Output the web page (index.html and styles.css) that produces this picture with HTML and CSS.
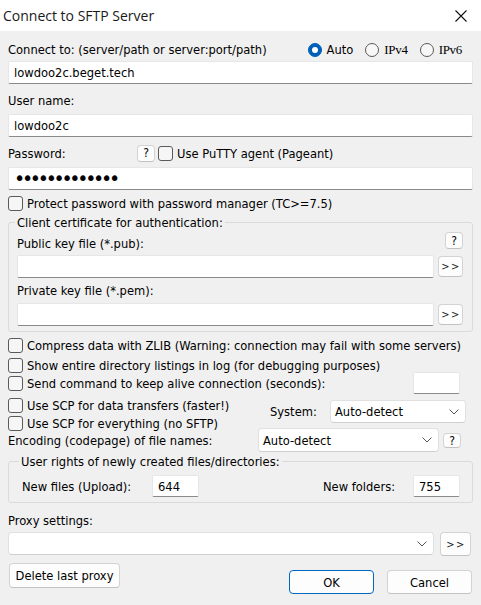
FILE: index.html
```html
<!DOCTYPE html>
<html>
<head>
<meta charset="utf-8">
<link rel="stylesheet" href="styles.css">
</head>
<body>
<div class="window">
  <div class="titlebar">
    <span class="title">Connect to SFTP Server</span>
    <svg class="close" width="12" height="12" viewBox="0 0 12 12"><path d="M0.5 0.5 L11.5 11.5 M11.5 0.5 L0.5 11.5" stroke="#111" stroke-width="1.1" fill="none"/></svg>
  </div>
  <div class="content">
    <div class="row r-connect">
      <span>Connect to: (server/path or server:port/path)</span>
      <div class="radios">
        <span class="radio on"></span><span class="rlabel">Auto</span>
        <span class="radio"></span><span class="rlabel serif">IPv4</span>
        <span class="radio"></span><span class="rlabel serif">IPv6</span>
      </div>
    </div>
    <div class="edit e-host">lowdoo2c.beget.tech</div>
    <div class="label l-user">User name:</div>
    <div class="edit e-user">lowdoo2c</div>
    <div class="row r-pass">
      <span class="pw-label">Password:</span>
      <span class="btn help">?</span>
      <span class="check"><span class="box"></span>Use PuTTY agent (Pageant)</span>
    </div>
    <div class="edit e-pass"><span class="dots">•••••••••••••</span></div>
    <div class="check r-protect"><span class="box"></span>Protect password with password manager (TC&gt;=7.5)</div>

    <fieldset class="group g-cert">
      <legend>Client certificate for authentication:</legend>
      <div class="r-pub">
        <span class="pub-label">Public key file (*.pub):</span>
        <span class="btn help help-pub">?</span>
      </div>
      <div class="file-row">
        <div class="edit grow"></div>
        <span class="btn more">&gt;&gt;</span>
      </div>
      <div class="label l-priv">Private key file (*.pem):</div>
      <div class="file-row r-priv">
        <div class="edit grow"></div>
        <span class="btn more">&gt;&gt;</span>
      </div>
    </fieldset>

    <div class="check c-row c-compress"><span class="box"></span>Compress data with ZLIB (Warning: connection may fail with some servers)</div>
    <div class="check c-row c-show"><span class="box"></span>Show entire directory listings in log (for debugging purposes)</div>
    <div class="check c-row c-send"><span class="box"></span>Send command to keep alive connection (seconds):<div class="edit small keepalive"></div></div>

    <div class="scp">
      <div class="scp-left">
        <div class="check c-row"><span class="box"></span>Use SCP for data transfers (faster!)</div>
        <div class="check c-row"><span class="box"></span>Use SCP for everything (no SFTP)</div>
      </div>
      <div class="system">
        <span class="sys-label">System:</span>
        <div class="combo sys-combo"><span>Auto-detect</span><svg class="chev" width="10" height="6" viewBox="0 0 10 6"><path d="M0.5 0.5 L5 5 L9.5 0.5" stroke="#555" stroke-width="1" fill="none"/></svg></div>
      </div>
    </div>

    <div class="enc">
      <span class="enc-label">Encoding (codepage) of file names:</span>
      <div class="combo enc-combo"><span>Auto-detect</span><svg class="chev" width="10" height="6" viewBox="0 0 10 6"><path d="M0.5 0.5 L5 5 L9.5 0.5" stroke="#555" stroke-width="1" fill="none"/></svg></div>
      <span class="btn help help-enc">?</span>
    </div>

    <fieldset class="group g-rights">
      <legend>User rights of newly created files/directories:</legend>
      <div class="rights-row">
        <span class="nf-label">New files (Upload):</span>
        <div class="edit small">644</div>
        <span class="nd-label">New folders:</span>
        <div class="edit small">755</div>
      </div>
    </fieldset>

    <div class="label l-proxy">Proxy settings:</div>
    <div class="proxy-row">
      <div class="combo proxy-combo"><span></span><svg class="chev" width="10" height="6" viewBox="0 0 10 6"><path d="M0.5 0.5 L5 5 L9.5 0.5" stroke="#555" stroke-width="1" fill="none"/></svg></div>
      <span class="btn more proxy-more">&gt;&gt;</span>
    </div>

    <div class="bottom">
      <span class="btn b-delete">Delete last proxy</span>
      <span class="btn b-ok">OK</span>
      <span class="btn b-cancel">Cancel</span>
    </div>
  </div>
</div>
</body>
</html>
```

FILE: styles.css
```css
html, body {
  margin: 0;
  padding: 0;
  background: #f0f0f0;
}
.window {
  width: 481px;
  height: 605px;
  background: #f0f0f0;
  display: flex;
  flex-direction: column;
  font-family: "DejaVu Sans Condensed", "DejaVu Sans", sans-serif;
  font-stretch: condensed;
  font-size: 12.8px;
  color: #000;
  overflow: hidden;
}
.titlebar {
  height: 31px;
  flex: none;
  background: #fff;
  display: flex;
  align-items: center;
  justify-content: space-between;
  padding: 0 14px 0 3px;
  box-sizing: border-box;
}
.title {
  font-family: "Open Sans", "Noto Sans", sans-serif;
  font-stretch: normal;
  font-size: 14px;
  color: #1a1a1a;
}
.close { display: block; }

.content {
  padding: 10px 8px 0 8px;
  display: flex;
  flex-direction: column;
}
.row {
  display: flex;
  align-items: center;
  height: 17px;
  line-height: 17px;
}
.label {
  height: 17px;
  line-height: 17px;
}
.radios {
  margin-left: auto;
  display: flex;
  align-items: center;
  padding-right: 11px;
}
.radio {
  width: 14px;
  height: 14px;
  box-sizing: border-box;
  border: 1px solid #5a5a5a;
  border-radius: 50%;
  background: #f7f7f7;
  margin-left: 12px;
  display: flex;
  align-items: center;
  justify-content: center;
}
.radio:first-child { margin-left: 0; }
.radio.on {
  background: #005fb8;
  border-color: #005fb8;
}
.radio.on::after {
  content: "";
  width: 6px;
  height: 6px;
  border-radius: 50%;
  background: #fff;
}
.rlabel { margin-left: 5px; }
.serif {
  font-family: "Liberation Serif", serif;
  font-size: 13px;
  letter-spacing: -0.3px;
}

.edit {
  height: 23px;
  box-sizing: border-box;
  border: 1px solid #e6e6e6;
  border-bottom-color: #8a8a8a;
  border-radius: 2px;
  background: #fff;
  padding: 0 5px;
  line-height: 21px;
  white-space: nowrap;
  overflow: hidden;
}
.e-host { margin-top: 3px; }
.l-user { margin-top: 8px; }
.e-user { margin-top: 5px; }
.r-pass { margin-top: 8px; }
.pw-label { width: 129px; flex: none; }
.e-pass { margin-top: 5px; }
.dots {
  font-family: "DejaVu Sans", sans-serif;
  font-stretch: normal;
  font-size: 19px;
  letter-spacing: -3.3px;
  line-height: 21px;
}

.check {
  display: flex;
  align-items: center;
  height: 17px;
  line-height: 17px;
  white-space: nowrap;
}
.box {
  width: 15px;
  height: 15px;
  box-sizing: border-box;
  border: 1px solid #5a5a5a;
  border-radius: 3px;
  background: #f6f6f6;
  margin-right: 4px;
  flex: none;
}
.r-pass .check { margin-left: 3px; }
.r-protect { margin-top: 5px; }

.btn {
  box-sizing: border-box;
  display: flex;
  align-items: center;
  justify-content: center;
  background: #fdfdfd;
  border: 1px solid #d3d3d3;
  border-bottom-color: #c2c2c2;
  border-radius: 4px;
  white-space: nowrap;
}
.help {
  width: 18px;
  height: 17px;
  font-size: 12px;
}

.group {
  margin: 0;
  border: 1px solid #dadada;
  border-radius: 3px;
  min-width: 0;
}
.group legend {
  padding: 0 2px;
  line-height: 17px;
  height: 17px;
}
.g-cert {
  margin-top: 2px;
  padding: 0 9px 5px 8px;
}
.g-cert legend { margin-left: -2px; }
.r-pub {
  height: 21px;
  display: flex;
  justify-content: space-between;
}
.pub-label {
  align-self: flex-end;
  line-height: 17px;
}
.help-pub { margin-top: 1px; }
.file-row {
  margin-top: 3px;
  display: flex;
  align-items: center;
  gap: 4px;
}
.grow { flex: 1; }
.more {
  width: 25px;
  height: 21px;
  font-size: 11px;
  letter-spacing: 1.5px;
  padding-left: 1px;
  color: #222;
}
.l-priv { margin-top: 4px; }
.r-priv { margin-top: 4px; }

.c-row { height: 18px; }
.c-compress { margin-top: 4px; }
.c-show { margin-top: 2px; }
.c-send { margin-top: -1px; height: 20px; }
.small {
  width: 47px;
  height: 22px;
  flex: none;
}
.keepalive {
  margin-left: auto;
  margin-right: 13px;
}

.scp {
  margin-top: 3px;
  display: flex;
}
.scp-left { display: flex; flex-direction: column; }
.system {
  margin-left: auto;
  margin-right: 7px;
  margin-top: 4px;
  display: flex;
  align-items: center;
  align-self: flex-start;
}
.sys-label { width: 60px; }

.combo {
  height: 23px;
  box-sizing: border-box;
  border: 1px solid #e0e0e0;
  border-bottom-color: #cfcfcf;
  border-radius: 4px;
  background: #fff;
  display: flex;
  align-items: center;
  justify-content: space-between;
  padding: 0 6px 0 4px;
}
.chev { display: block; }
.sys-combo { width: 136px; }

.enc {
  margin-top: -4px;
  height: 24px;
  display: flex;
  align-items: center;
}
.enc-label { width: 250px; flex: none; }
.enc-combo { width: 181px; height: 24px; }
.help-enc {
  margin-left: 4px;
  height: 15px;
  margin-top: 1px;
}

.g-rights {
  margin-top: 1px;
  padding: 5px 12px 5px 13px;
}
.g-rights legend { margin-left: -3px; }
.rights-row {
  display: flex;
  align-items: center;
  height: 22px;
}
.nf-label { width: 130px; }
.nd-label { margin-left: auto; width: 90px; }

.l-proxy { margin-top: 9px; }
.proxy-row {
  margin-top: 3px;
  display: flex;
  align-items: flex-start;
  gap: 6px;
}
.proxy-combo { width: 426px; }
.proxy-more { width: 31px; height: 24px; }

.bottom {
  margin-top: 7px;
  display: flex;
  align-items: flex-start;
}
.b-delete {
  margin-left: 1px;
  width: 111px;
  height: 25px;
}
.b-ok {
  margin-top: 7px;
  margin-left: auto;
  width: 85px;
  height: 24px;
  border: 1px solid #0067c0;
}
.b-cancel {
  margin-top: 7px;
  margin-left: 13px;
  margin-right: 1px;
  width: 85px;
  height: 24px;
}
```
